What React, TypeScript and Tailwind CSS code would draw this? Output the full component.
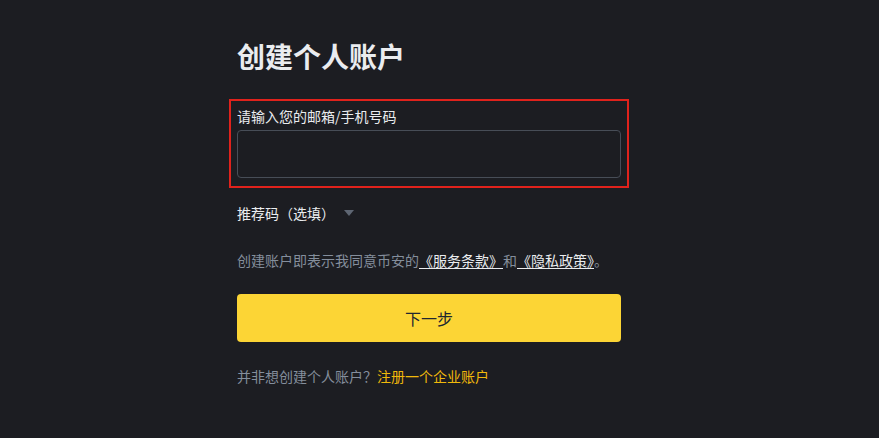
export default function App() {
  return (
    <div
      className="h-[438px] w-full overflow-hidden bg-[#1c1d22] pl-[237px] pt-[38px]"
      style={{ fontFamily: '"Noto Sans CJK SC", "Noto Sans", sans-serif' }}
    >
      <div className="flex w-[384px] flex-col">
        <h1 className="text-[28px] font-bold leading-[36px] text-[#eaecef]">创建个人账户</h1>

        {/* highlighted field */}
        <div className="-mx-[8px] mt-[25px] border-2 border-[#e0221c] px-[6px] pb-[8px] pt-[5px]">
          <label className="block text-sm leading-[20px] text-[#eaecef]">请输入您的邮箱/手机号码</label>
          <input
            type="text"
            className="mt-[4px] block h-[48px] w-full rounded-[4px] border border-[#474d57] bg-[#1c1d22] px-3 text-sm text-[#eaecef] outline-none"
          />
        </div>

        <div className="mt-[15px] flex items-center gap-[9px] text-sm leading-[20px] text-[#eaecef]">
          <span>推荐码（选填）</span>
          <svg width="10" height="6" viewBox="0 0 10 6" className="text-[#5e6673]">
            <path d="M0 0h10L5 6z" fill="currentColor" />
          </svg>
        </div>

        <p className="mt-[27px] whitespace-nowrap text-sm leading-[20px] text-[#848e9c]">
          创建账户即表示我同意币安的
          <a className="text-[#eaecef] underline underline-offset-2">《服务条款》</a>和
          <a className="text-[#eaecef] underline underline-offset-2">《隐私政策》</a>。
        </p>

        <button className="mt-[24px] flex h-[48px] w-full items-center justify-center rounded-[4px] bg-[#fcd535] text-base text-[#202630]">
          下一步
        </button>

        <p className="mt-[24px] text-sm leading-[20px] text-[#848e9c]">
          并非想创建个人账户？<a className="text-[#f0b90b]">注册一个企业账户</a>
        </p>
      </div>
    </div>
  );
}
